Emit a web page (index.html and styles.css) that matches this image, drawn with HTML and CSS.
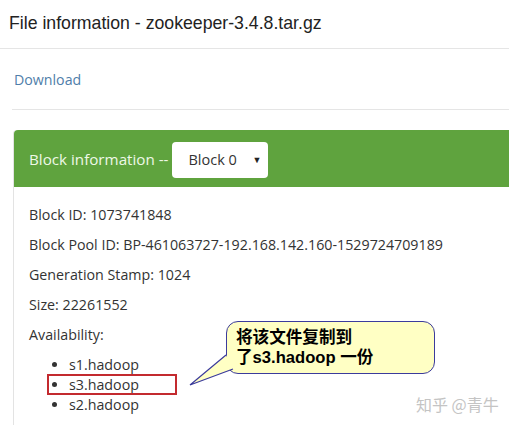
FILE: index.html
```html
<!DOCTYPE html>
<html lang="en">
<head>
    <meta charset="UTF-8">
    <meta name="viewport" content="width=device-width, initial-scale=1.0">
    <title>File information</title>
    <link rel="stylesheet" href="styles.css">
</head>
<body>
    <div class="page">
        <div class="title-bar">
            <h4 class="title">File information - zookeeper-3.4.8.tar.gz</h4>
        </div>
        <div class="download-row">
            <a class="download" href="#">Download</a>
        </div>
        <div class="panel">
            <div class="panel-heading">
                <span class="heading-text">Block information --</span>
                <div class="select">
                    <span>Block 0</span>
                    <span class="caret">&#9660;</span>
                </div>
            </div>
            <div class="panel-body">
                <p>Block ID: 1073741848</p>
                <p>Block Pool ID: BP-461063727-192.168.142.160-1529724709189</p>
                <p>Generation Stamp: 1024</p>
                <p>Size: 22261552</p>
                <p>Availability:</p>
                <ul class="hosts">
                    <li>s1.hadoop</li>
                    <li class="marked">s3.hadoop<span class="red-box"></span></li>
                    <li>s2.hadoop</li>
                </ul>
            </div>
        </div>

        <div class="callout">
            <div class="callout-text">将该文件复制到<br>了s3.hadoop 一份</div>
        </div>
        <svg class="callout-tail" width="50" height="40" viewBox="0 0 50 40">
            <polygon points="37,3 1,33 44,17" fill="#ffffc4"/>
            <polyline points="37,3 1,33 44,17" fill="none" stroke="#3b3b9c" stroke-width="1.2"/>
        </svg>
        <div class="watermark">知乎 @青牛</div>
    </div>
</body>
</html>
```

FILE: styles.css
```css
html, body {
    margin: 0;
    padding: 0;
    overflow: hidden;
}
body {
    background-color: #fff;
    font-family: "Open Sans", "Noto Sans", sans-serif;
    color: #333;
}
.page {
    position: relative;
    width: 509px;
    height: 425px;
}
.title-bar {
    height: 48px;
    border-bottom: 1px solid #e5e5e5;
    padding-left: 9px;
}
.title {
    margin: 0;
    padding-top: 11px;
    font-family: "Liberation Sans", Arial, sans-serif;
    font-weight: normal;
    font-size: 17.7px;
    line-height: 24px;
    color: #222;
}
.download-row {
    height: 60px;
    margin-left: 12px;
    padding-left: 2px;
    border-bottom: 1px solid #e5e5e5;
    display: flex;
    align-items: center;
}
.download {
    font-size: 14.2px;
    color: #4f7eaa;
    text-decoration: none;
}
.panel {
    margin: 20px -30px 0 13px;
    border: 1px solid #e3e3e3;
    border-top: none;
    border-radius: 4px 4px 0 0;
}
.panel-heading {
    height: 57px;
    background-color: #5fa33e;
    border-radius: 4px 4px 0 0;
    padding-left: 15px;
    display: flex;
    align-items: center;
    gap: 3px;
}
.heading-text {
    color: #eef8e6;
    font-size: 15.2px;
}
.select {
    width: 96px;
    height: 36px;
    background-color: #fff;
    border-radius: 4px;
    box-sizing: border-box;
    padding: 0 6px 0 17px;
    display: flex;
    align-items: center;
    justify-content: space-between;
    font-size: 14.5px;
    color: #333;
    margin-top: 2px;
}
.caret {
    font-size: 9px;
    color: #222;
}
.panel-body {
    padding: 13px 0 20px 15px;
    font-size: 14.25px;
}
.panel-body p {
    margin: 0;
    line-height: 30px;
}
.hosts {
    margin: 5px 0 0 0;
    padding-left: 40px;
}
.hosts li {
    line-height: 20px;
}
.marked {
    position: relative;
}
.red-box {
    position: absolute;
    left: -22px;
    top: -1px;
    width: 126px;
    height: 17px;
    border: 2px solid #c32a2f;
}
.callout {
    position: absolute;
    left: 226px;
    top: 321px;
    width: 209px;
    height: 53px;
    box-sizing: border-box;
    background-color: #ffffc4;
    border: 1.5px solid #3b3b9c;
    border-radius: 12px;
    padding: 6px 0 0 9px;
}
.callout-text {
    font-family: "Liberation Sans", "Noto Sans CJK SC", sans-serif;
    font-weight: bold;
    font-size: 16.6px;
    line-height: 20px;
    color: #000;
}
.callout-tail {
    position: absolute;
    left: 189px;
    top: 352px;
}
.watermark {
    position: absolute;
    left: 416px;
    top: 392px;
    font-family: "Noto Sans CJK SC", sans-serif;
    font-size: 16px;
    color: #c4c4c4;
}
```
